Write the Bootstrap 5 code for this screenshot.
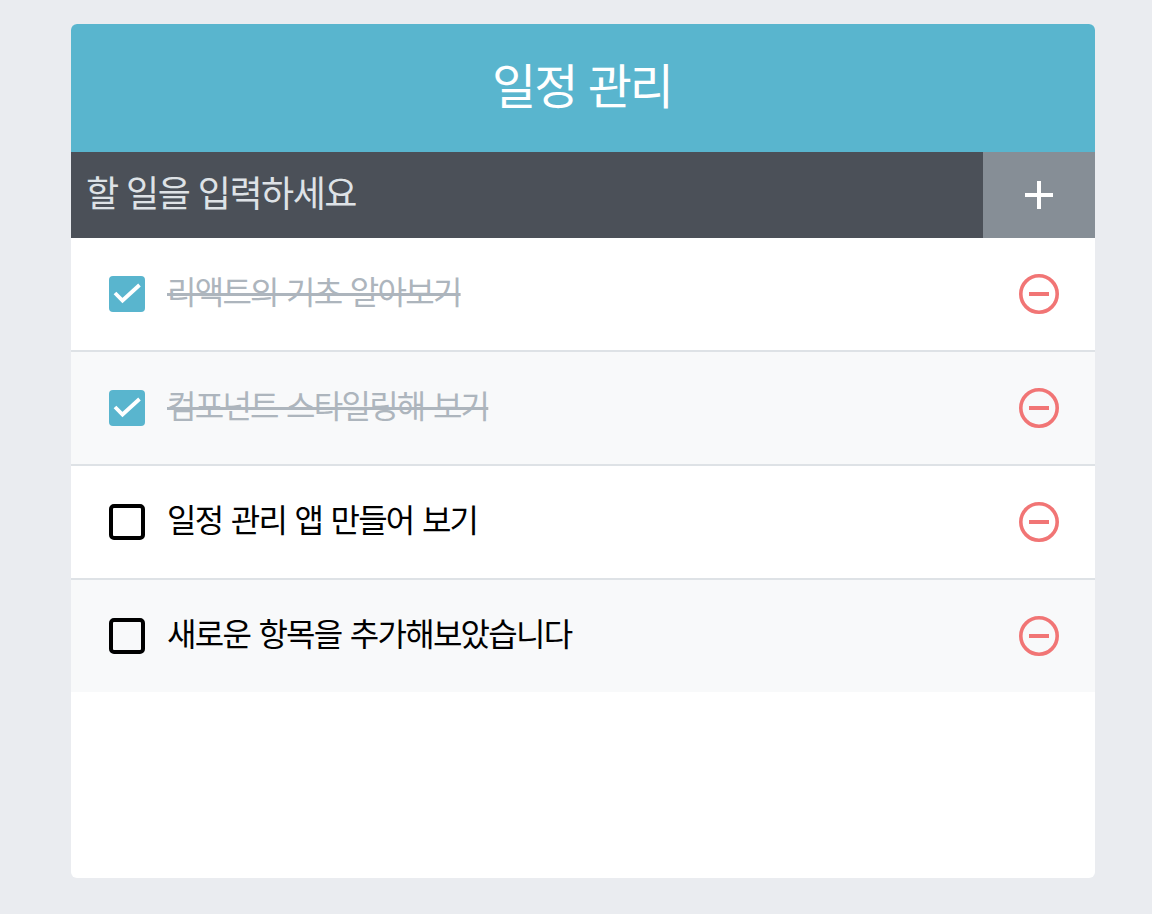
<!doctype html>
<html lang="ko"><head><meta charset="utf-8">
<link href="https://cdn.jsdelivr.net/npm/bootstrap@5.3.0/dist/css/bootstrap.min.css" rel="stylesheet">
<style>
body{background:#eaecf0;font-family:"Liberation Sans","Noto Sans CJK KR",sans-serif;}
.shell{width:1024px;margin:24px 0 0 71px;height:854px;border-radius:6px;background:#fff;overflow:hidden;}
.head{height:128px;background:#59b5ce;color:#fff;font-size:48px;letter-spacing:-2px;padding-right:2px;}
.addbar{height:86px;background:#4b5058;}
.addtext{color:#dee2e6;font-size:36px;letter-spacing:-1.5px;padding-left:15px;}
.addbtn{width:112px;background:#868e96;}
.item{height:114px;border-bottom:2px solid #dee2e6;padding:0 36px 0 38px;font-size:32px;letter-spacing:-1.75px;word-spacing:1.2px;color:#000;}
.item:last-child{border-bottom:0;height:112px;}
.item:nth-child(even){background:#f8f9fa;}
.done{color:#adb5bd;text-decoration:line-through;}
.lbl{margin-left:22px;padding-bottom:3px;}
</style></head><body>
<div class="shell d-flex flex-column">
<div class="head d-flex align-items-center justify-content-center">일정 관리</div>
<div class="addbar d-flex"><div class="addtext flex-grow-1 d-flex align-items-center">할 일을 입력하세요</div>
<div class="addbtn d-flex align-items-center justify-content-center"><svg width="28" height="28" viewBox="0 0 28 28"><path d="M14 0v28M0 14h28" stroke="#fff" stroke-width="4"/></svg></div></div>
<div>
<div class="item d-flex align-items-center"><svg width="36" height="36" viewBox="0 0 36 36"><rect width="36" height="36" rx="4" fill="#59b5ce"/><path d="M6 17l7.500 7.500L30.500 9" stroke="#fff" stroke-width="3.800" fill="none"/></svg><span class="lbl done flex-grow-1">리액트의 기초 알아보기</span><svg width="40" height="40" viewBox="0 0 40 40"><circle cx="20" cy="20" r="18.200" fill="none" stroke="#f17575" stroke-width="3.600"/><path d="M10 20h20" stroke="#f17575" stroke-width="4"/></svg></div>
<div class="item d-flex align-items-center"><svg width="36" height="36" viewBox="0 0 36 36"><rect width="36" height="36" rx="4" fill="#59b5ce"/><path d="M6 17l7.500 7.500L30.500 9" stroke="#fff" stroke-width="3.800" fill="none"/></svg><span class="lbl done flex-grow-1">컴포넌트 스타일링해 보기</span><svg width="40" height="40" viewBox="0 0 40 40"><circle cx="20" cy="20" r="18.200" fill="none" stroke="#f17575" stroke-width="3.600"/><path d="M10 20h20" stroke="#f17575" stroke-width="4"/></svg></div>
<div class="item d-flex align-items-center"><svg width="36" height="36" viewBox="0 0 36 36"><rect x="2" y="2" width="32" height="32" rx="3" fill="none" stroke="#000" stroke-width="4"/></svg><span class="lbl flex-grow-1">일정 관리 앱 만들어 보기</span><svg width="40" height="40" viewBox="0 0 40 40"><circle cx="20" cy="20" r="18.200" fill="none" stroke="#f17575" stroke-width="3.600"/><path d="M10 20h20" stroke="#f17575" stroke-width="4"/></svg></div>
<div class="item d-flex align-items-center"><svg width="36" height="36" viewBox="0 0 36 36"><rect x="2" y="2" width="32" height="32" rx="3" fill="none" stroke="#000" stroke-width="4"/></svg><span class="lbl flex-grow-1">새로운 항목을 추가해보았습니다</span><svg width="40" height="40" viewBox="0 0 40 40"><circle cx="20" cy="20" r="18.200" fill="none" stroke="#f17575" stroke-width="3.600"/><path d="M10 20h20" stroke="#f17575" stroke-width="4"/></svg></div>
</div></div>
<script src="https://cdn.jsdelivr.net/npm/bootstrap@5.3.0/dist/js/bootstrap.bundle.min.js"></script>
</body></html>
